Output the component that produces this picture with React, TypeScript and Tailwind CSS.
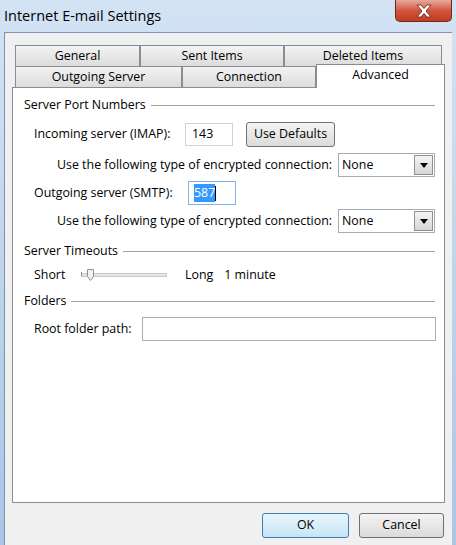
import React from 'react'

// Win7 "Internet E-mail Settings" dialog — Advanced tab.

const font = { fontFamily: '"Open Sans", "Noto Sans", "DejaVu Sans", sans-serif' }

function Tab({ label, w, selected }: { label: string; w: string; selected?: boolean }) {
  if (selected) {
    return (
      <div
        className={`${w} -mt-[2px] -mb-[2px] relative z-10 flex h-[24px] items-start justify-center border border-b-0 border-[#898c95] bg-white pt-[1px]`}
      >
        {label}
      </div>
    )
  }
  return (
    <div
      className={`${w} flex h-[21px] items-center justify-center border border-b-0 border-[#898c95] bg-gradient-to-b from-[#f3f3f3] to-[#dcdcdc]`}
    >
      {label}
    </div>
  )
}

function Section({ title, className }: { title: string; className?: string }) {
  return (
    <div className={`flex h-[16px] items-center gap-[5px] ${className ?? ''}`}>
      <span className="whitespace-nowrap">{title}</span>
      <div className="h-px flex-1 bg-[#a0a0a0]" />
    </div>
  )
}

function Select() {
  return (
    <div className="ml-auto flex h-[24px] w-[97px] items-center border border-[#a5acb5] bg-white pl-[3px] pr-[1px]">
      <span className="flex-1">None</span>
      <div className="flex h-[20px] w-[19px] items-center justify-center border border-[#8f8f8f] bg-gradient-to-b from-[#f4f4f4] to-[#d6d6d6]">
        <svg width="8" height="5" viewBox="0 0 8 5">
          <path d="M0 0h8L4 5z" fill="#000" />
        </svg>
      </div>
    </div>
  )
}

function Button({ label, w, primary }: { label: string; w: string; primary?: boolean }) {
  return (
    <div
      className={`${w} flex h-[25px] items-center justify-center rounded-[3px] border ${
        primary
          ? 'border-[#3c7fb1] bg-gradient-to-b from-[#eaf6fd] to-[#c7e4f5]'
          : 'border-[#707070] bg-gradient-to-b from-[#f4f4f4] to-[#dbdbdb]'
      }`}
    >
      {label}
    </div>
  )
}

export default function App() {
  return (
    <div
      className="flex h-[545px] w-[456px] flex-col overflow-hidden bg-gradient-to-b from-[#d3e3f4] to-[#a9c6e6] text-[12.4px] text-black"
      style={font}
    >
      {/* title bar */}
      <div className="flex h-[32px] items-start">
        <div className="pl-[4px] pt-[5px] text-[14.5px] text-[#000]">Internet E-mail Settings</div>
        <div className="ml-auto mr-[4px] flex h-[22px] w-[57px] items-center justify-center rounded-b-[5px] border border-t-0 border-[#6b2a20] bg-gradient-to-b from-[#e9a99b] via-[#d0553c] to-[#c23b22]">
          <svg width="18" height="14" viewBox="0 0 18 14">
            <path
              d="M2 1h4l3 3.5L12 1h4l-5 6 5 6h-4l-3-3.5L6 13H2l5-6z"
              fill="#fff"
              stroke="#5a1e14"
              strokeWidth="0.8"
            />
          </svg>
        </div>
      </div>

      {/* client area */}
      <div className="mx-[4px] flex flex-1 flex-col border-l border-t border-[#7f93ad] bg-[#f0f0f0]">
        <div className="mt-[12px] ml-[7px] mr-[7px] flex flex-col">
          {/* tab rows */}
          <div className="ml-[3px] flex">
            <Tab label="General" w="w-[125px]" />
            <Tab label="Sent Items" w="w-[144px]" />
            <Tab label="Deleted Items" w="w-[158px]" />
          </div>
          <div className="ml-[3px] flex">
            <Tab label="Outgoing Server" w="w-[167px]" />
            <Tab label="Connection" w="w-[134px]" />
            <Tab label="Advanced" w="w-[129px]" selected />
          </div>

          {/* panel */}
          <div className="flex h-[416px] flex-col border border-[#898c95] bg-white pl-[11px] pr-[9px]">
            <Section title="Server Port Numbers" className="mt-[9px]" />

            <div className="mt-[9px] flex h-[25px] items-center pl-[10px]">
              <span className="w-[151px]">Incoming server (IMAP):</span>
              <div className="flex h-[23px] w-[48px] items-center border border-[#c9d3dd] pl-[6px]">143</div>
              <div className="ml-[13px]">
                <Button label="Use Defaults" w="w-[89px]" />
              </div>
            </div>

            <div className="mt-[6px] flex items-center pl-[33px]">
              <span>Use the following type of encrypted connection:</span>
              <Select />
            </div>

            <div className="mt-[4px] flex h-[24px] items-center pl-[10px]">
              <span className="w-[154px]">Outgoing server (SMTP):</span>
              <div className="flex h-[24px] w-[48px] items-center border border-[#7eb4ea] pl-[5px]">
                <span className="bg-[#3399ff] text-white">587</span>
                <span className="h-[15px] w-px bg-black" />
              </div>
            </div>

            <div className="mt-[4px] flex items-center pl-[33px]">
              <span>Use the following type of encrypted connection:</span>
              <Select />
            </div>

            <Section title="Server Timeouts" className="mt-[10px]" />

            <div className="mt-[8px] flex h-[16px] items-center pl-[10px]">
              <span className="w-[47px]">Short</span>
              <div className="relative flex h-[14px] w-[86px] items-center">
                <div className="h-[4px] w-full border border-[#c8c8c8] bg-[#e7e7e7]" />
                <svg className="absolute left-[6px] top-[1px]" width="7" height="12" viewBox="0 0 7 12">
                  <path d="M0.5 0.5h6v7l-3 4l-3-4z" fill="#f2f2f2" stroke="#909090" />
                </svg>
                <div className="absolute left-0 top-[4px] h-[4px] w-px bg-[#909090]" />
              </div>
              <span className="ml-[18px]">Long</span>
              <span className="ml-[11px]">1 minute</span>
            </div>

            <Section title="Folders" className="mt-[10px]" />

            <div className="mt-[8px] flex h-[24px] items-center pl-[10px]">
              <span className="w-[108px]">Root folder path:</span>
              <div className="-mr-px h-[24px] flex-1 border border-[#abadb3]" />
            </div>
          </div>

          {/* buttons */}
          <div className="mt-[10px] flex justify-end gap-[10px] pr-[1px]">
            <Button label="OK" w="w-[87px]" primary />
            <Button label="Cancel" w="w-[85px]" />
          </div>
        </div>
      </div>
    </div>
  )
}
